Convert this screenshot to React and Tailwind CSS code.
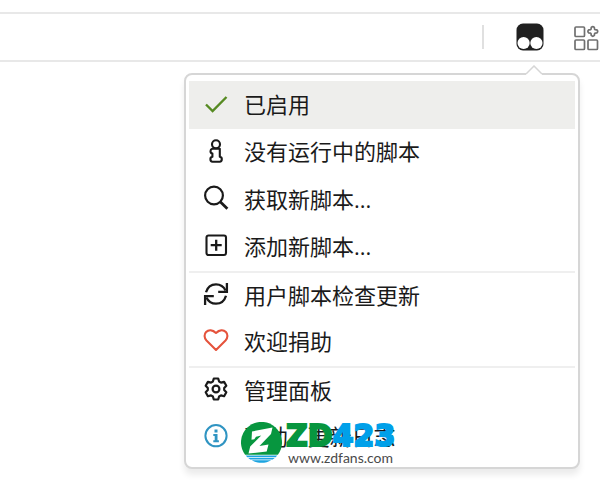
const iconClass = 'h-7 w-7 shrink-0';

const CheckIcon = () => (
    <svg className={`${iconClass} text-[#568a22]`} viewBox="0 0 28 28" fill="none" stroke="currentColor" strokeWidth="2.4" aria-hidden="true">
        <path d="M4 14.500l6.600 6.500L24.500 7" />
    </svg>
);

const InfoLetterIcon = () => (
    <svg className={iconClass} viewBox="0 0 28 28" fill="none" stroke="currentColor" strokeWidth="2.100" strokeLinejoin="round" aria-hidden="true">
        <circle cx="14" cy="6.300" r="4" />
        <path d="M10.200 10.700h7.600v8c1.500.3 2 .9 2 2.300s-.6 2.700-2.100 2.700h-7.200c-1.500 0-2.100-1.300-2.100-2.700s.5-2 2-2.300v-3.200c-1.400-.3-1.900-1-1.900-2.300s.3-2.100 1.700-2.500z" />
    </svg>
);

const SearchIcon = () => (
    <svg className={iconClass} viewBox="0 0 28 28" fill="none" stroke="currentColor" strokeWidth="2.200" aria-hidden="true">
        <circle cx="12" cy="10.500" r="8.900" />
        <path d="M18.200 16.800l7.200 7" strokeWidth="2.800" />
    </svg>
);

const PlusBoxIcon = () => (
    <svg className={iconClass} viewBox="0 0 28 28" fill="none" stroke="currentColor" strokeWidth="2.100" aria-hidden="true">
        <rect x="4.500" y="2.500" width="19.500" height="19.500" rx="2" />
        <path d="M14.200 6.700v11M8.700 12.200h11" strokeWidth="2.300" />
    </svg>
);

const RefreshIcon = () => (
    <svg className={iconClass} viewBox="0 0 28 28" fill="none" stroke="currentColor" strokeWidth="2.300" aria-hidden="true">
        <path d="M4 11.300C5.400 6.500 9.200 3.400 14 3.400c4.300 0 7.700 2.200 9.600 6.200" />
        <path d="M24.900 2v8.900h-8.700" />
        <path d="M24 14.700c-1.400 4.800-5.200 7.900-10 7.900-4.300 0-7.700-2.200-9.600-6.200" />
        <path d="M3.100 24v-8.900h8.700" />
    </svg>
);

const HeartIcon = () => (
    <svg className={`${iconClass} text-[#e5533c]`} viewBox="0 0 28 28" fill="none" stroke="currentColor" strokeWidth="2.100" strokeLinejoin="round" aria-hidden="true">
        <path d="M14 21.900L4.500 12.500C2 9.800 2 6.100 4.100 4c2.500-2.500 6.500-2.200 9.900 1 3.400-3.200 7.400-3.500 9.900-1 2.100 2.100 2.100 5.800-.4 8.500z" />
    </svg>
);

const GearIcon = () => (
    <svg className={iconClass} viewBox="0 0 28 28" fill="none" stroke="currentColor" strokeWidth="2.200" strokeLinejoin="round" aria-hidden="true">
        <path d="M11.800 2.500h4.400l.9 3 1.900 1.100 3.100-.8 2.200 3.900-2.100 2.200v2.200l2.100 2.200-2.200 3.900-3.100-.8-1.900 1.100-.9 3h-4.400l-.9-3-1.900-1.100-3.100.8-2.200-3.900 2.100-2.200v-2.200L3.700 9.700l2.200-3.900 3.100.8 1.900-1.100z" />
        <circle cx="14" cy="13" r="3.400" />
    </svg>
);

const InfoCircleIcon = () => (
    <svg className={`${iconClass} text-[#2f94c2]`} viewBox="0 0 28 28" fill="none" stroke="currentColor" strokeWidth="2" aria-hidden="true">
        <circle cx="14" cy="12.700" r="10.600" />
        <path d="M12.500 6.500h3v3h-3zM11.300 11h4.200v6.300h1.400v1.900h-5.600v-1.900h1.400v-4.400h-1.400z" fill="currentColor" stroke="none" />
    </svg>
);

const groups = [
    [
        { label: '已启用', Icon: CheckIcon, height: 'h-12', active: true },
        { label: '没有运行中的脚本', Icon: InfoLetterIcon, height: 'h-[47px]' },
        { label: '获取新脚本...', Icon: SearchIcon, height: 'h-12' },
        { label: '添加新脚本...', Icon: PlusBoxIcon, height: 'h-[47px]' },
    ],
    [
        { label: '用户脚本检查更新', Icon: RefreshIcon, height: 'h-[46px]' },
        { label: '欢迎捐助', Icon: HeartIcon, height: 'h-[47px]' },
    ],
    [
        { label: '管理面板', Icon: GearIcon, height: 'h-[46px]' },
        { label: '帮助 / 更新日志', Icon: InfoCircleIcon, height: 'h-[47px]' },
    ],
];

const Toolbar = () => {
    return (
        <header className="flex h-[50px] items-center justify-end border-y-2 border-[#e8e8e8]">
            <div className="h-6 w-0.5 bg-[#e0e0e0]"></div>
            <button type="button" aria-label="Tampermonkey" className="ml-8">
                <svg className="h-7 w-7" viewBox="0 0 28 28" aria-hidden="true">
                    <rect x=".500" y=".500" width="27" height="27" rx="6.500" fill="#202020" />
                    <circle cx="7.600" cy="20" r="6.100" fill="#fff" />
                    <circle cx="20.400" cy="20" r="6.100" fill="#fff" />
                </svg>
            </button>
            <button type="button" aria-label="Extensions" className="ml-7">
                <svg className="h-7 w-7" viewBox="0 0 28 28" fill="none" stroke="#707070" strokeWidth="1.700" strokeLinejoin="round" aria-hidden="true">
                    <rect x="3" y="4" width="9.500" height="9.500" rx="1" />
                    <rect x="3" y="17" width="9.500" height="9.500" rx="1" />
                    <rect x="16" y="17" width="9.500" height="9.500" rx="1" />
                    <path d="M19.300 4.300q1.500-1.500 3 0l.3 1.900q.1.300.4.400l1.900.3q1.500 1.500 0 3l-1.900.3q-.3.100-.4.400l-.3 1.900q-1.500 1.500-3 0l-.3-1.900q-.1-.3-.4-.4l-1.900-.3q-1.500-1.500 0-3l1.900-.3q.3-.1.400-.4z" />
                </svg>
            </button>
        </header>
    );
};

const Watermark = () => {
    return (
        <div className="pointer-events-none absolute bottom-px left-[55px] flex items-start">
            <svg className="h-[41px] w-[41px]" viewBox="0 0 41 41" aria-hidden="true">
                <path d="M4.100 32.700A20.500 20.500 0 1 1 36.900 32.700z" fill="#07963f" />
                <path d="M4.700 33.500h31.600l-1.600 1.700H6.300zM7.200 36h26.600l-2.100 1.500H9.300zM10.700 38.300h19.600c-5.500 3.400-14.100 3.400-19.600 0z" fill="#1ca4e0" />
                <path d="M11 9.500L31.500 5.500l-1.500 6.500-11.500 12 9-1.500-1.800 7L7.500 31.500l1.700-7 11-11-5.200 1.200-1.700 2.500-2.800.5z" fill="#fff" />
            </svg>
            <div className="ml-1">
                <p className="font-['DejaVu_Sans',sans-serif] text-[30px] font-bold leading-7 text-[#07963f] [-webkit-text-stroke:2px_currentColor]">
                    ZD<span className="text-[#00a0e9]">423</span>
                </p>
                <p className="pl-0.5 font-['Lato',sans-serif] text-sm leading-4 text-[#4a4a4a]">www.zdfans.com</p>
            </div>
        </div>
    );
};

const PopupMenu = () => {
    return (
        <nav className="relative mt-[11px] mr-5 ml-auto w-full max-w-[396px] rounded-lg border-2 border-[#d6d6d6] bg-white px-[3px] py-1.5 shadow-[0_6px_6px_rgba(0,0,0,0.08)]">
            <svg className="absolute -top-2.5 right-9 h-2.5 w-4" viewBox="0 0 16 10" fill="#fff" aria-hidden="true">
                <path d="M0 9l8-8 8 8v1H0z" />
                <path d="M0 9l8-8 8 8" stroke="#d6d6d6" strokeWidth="1.500" />
            </svg>
            {groups.map((items, index) => (
                <ul key={index} className={index > 0 ? 'border-t-2 border-[#efefef]' : ''}>
                    {items.map(({ label, Icon, height, active }) => (
                        <li key={label}>
                            <button
                                type="button"
                                className={`flex w-full items-center gap-3.5 px-[13px] pb-0.5 text-left text-[22px] ${height} ${active ? 'bg-[#eeeeec]' : ''}`}
                            >
                                <Icon />
                                <span>{label}</span>
                            </button>
                        </li>
                    ))}
                </ul>
            ))}
            <Watermark />
        </nav>
    );
};

const App = () => {
    return (
        <div className="min-h-screen overflow-x-hidden bg-white pt-3 font-['Open_Sans','Noto_Sans_CJK_SC',sans-serif] text-[#1a1a1a]">
            <Toolbar />
            <PopupMenu />
        </div>
    );
};

export default App;
